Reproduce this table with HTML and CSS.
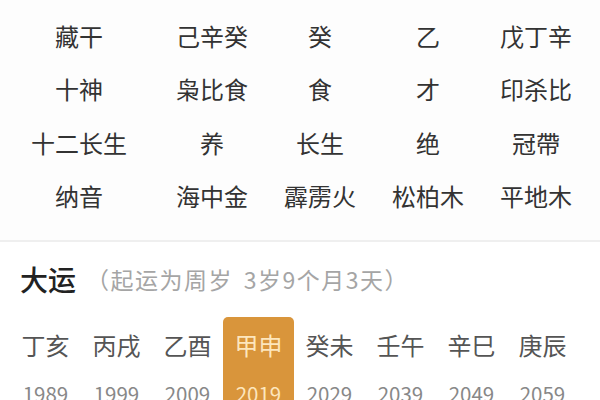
FILE: index.html
```html
<!DOCTYPE html>
<html lang="zh-CN">
<head>
<meta charset="utf-8">
<link rel="stylesheet" href="styles.css">
</head>
<body>
<div class="page">
  <section class="pillars">
    <div class="row"><span class="label">藏干</span><span>己辛癸</span><span>癸</span><span>乙</span><span>戊丁辛</span></div>
    <div class="row"><span class="label">十神</span><span>枭比食</span><span>食</span><span>才</span><span>印杀比</span></div>
    <div class="row"><span class="label">十二长生</span><span>养</span><span>长生</span><span>绝</span><span>冠帶</span></div>
    <div class="row"><span class="label">纳音</span><span>海中金</span><span>霹雳火</span><span>松柏木</span><span>平地木</span></div>
  </section>
  <div class="divider"></div>
  <section class="dayun">
    <div class="dayun-head"><span class="title">大运</span><span class="sub">（起运为周岁 3岁9个月3天）</span></div>
    <div class="dayun-list">
      <div class="item"><div class="gz">丁亥</div><div class="yr">1989</div></div>
      <div class="item"><div class="gz">丙戌</div><div class="yr">1999</div></div>
      <div class="item"><div class="gz">乙酉</div><div class="yr">2009</div></div>
      <div class="item active"><div class="gz">甲申</div><div class="yr">2019</div></div>
      <div class="item"><div class="gz">癸未</div><div class="yr">2029</div></div>
      <div class="item"><div class="gz">壬午</div><div class="yr">2039</div></div>
      <div class="item"><div class="gz">辛巳</div><div class="yr">2049</div></div>
      <div class="item"><div class="gz">庚辰</div><div class="yr">2059</div></div>
    </div>
  </section>
</div>
</body>
</html>
```

FILE: styles.css
```css
* { box-sizing: border-box; margin: 0; padding: 0; }
html, body { width: 600px; height: 400px; overflow: hidden; background: #fff; }
body { font-family: "Noto Sans CJK SC", "Noto Sans", sans-serif; }
.page { width: 600px; }

.pillars { padding: 9px 0 17px; background: #fdfdfd; }
.row {
  display: grid;
  grid-template-columns: 158px repeat(4, 108px);
  height: 53.5px;
  align-items: center;
  justify-items: center;
  font-size: 24px;
  line-height: 34px;
  color: #333;
}

.divider { height: 2px; background: #efefef; }

.dayun { padding-top: 17px; }
.dayun-head {
  display: flex;
  align-items: center;
  height: 40px;
  padding-left: 20px;
}
.title { font-size: 28px; font-weight: 500; color: #222; line-height: 40px; }
.sub {
  font-size: 23px;
  letter-spacing: 1.5px;
  word-spacing: 4px;
  color: #a5a5a5;
  margin-left: 10px;
  line-height: 40px;
  white-space: nowrap;
}

.dayun-list {
  display: grid;
  grid-template-columns: repeat(8, 71px);
  padding-left: 10px;
  margin-top: 18px;
}
.item {
  display: flex;
  flex-direction: column;
  align-items: center;
  padding-top: 11px;
  height: 100px;
  border-radius: 5px 5px 0 0;
}
.gz { font-size: 24px; line-height: 34px; color: #555; }
.yr { font-size: 20.5px; line-height: 28px; color: #888; margin-top: 17px; }
.item.active { background: #d9953b; }
.item.active .gz, .item.active .yr { color: #fde6bd; }
```
